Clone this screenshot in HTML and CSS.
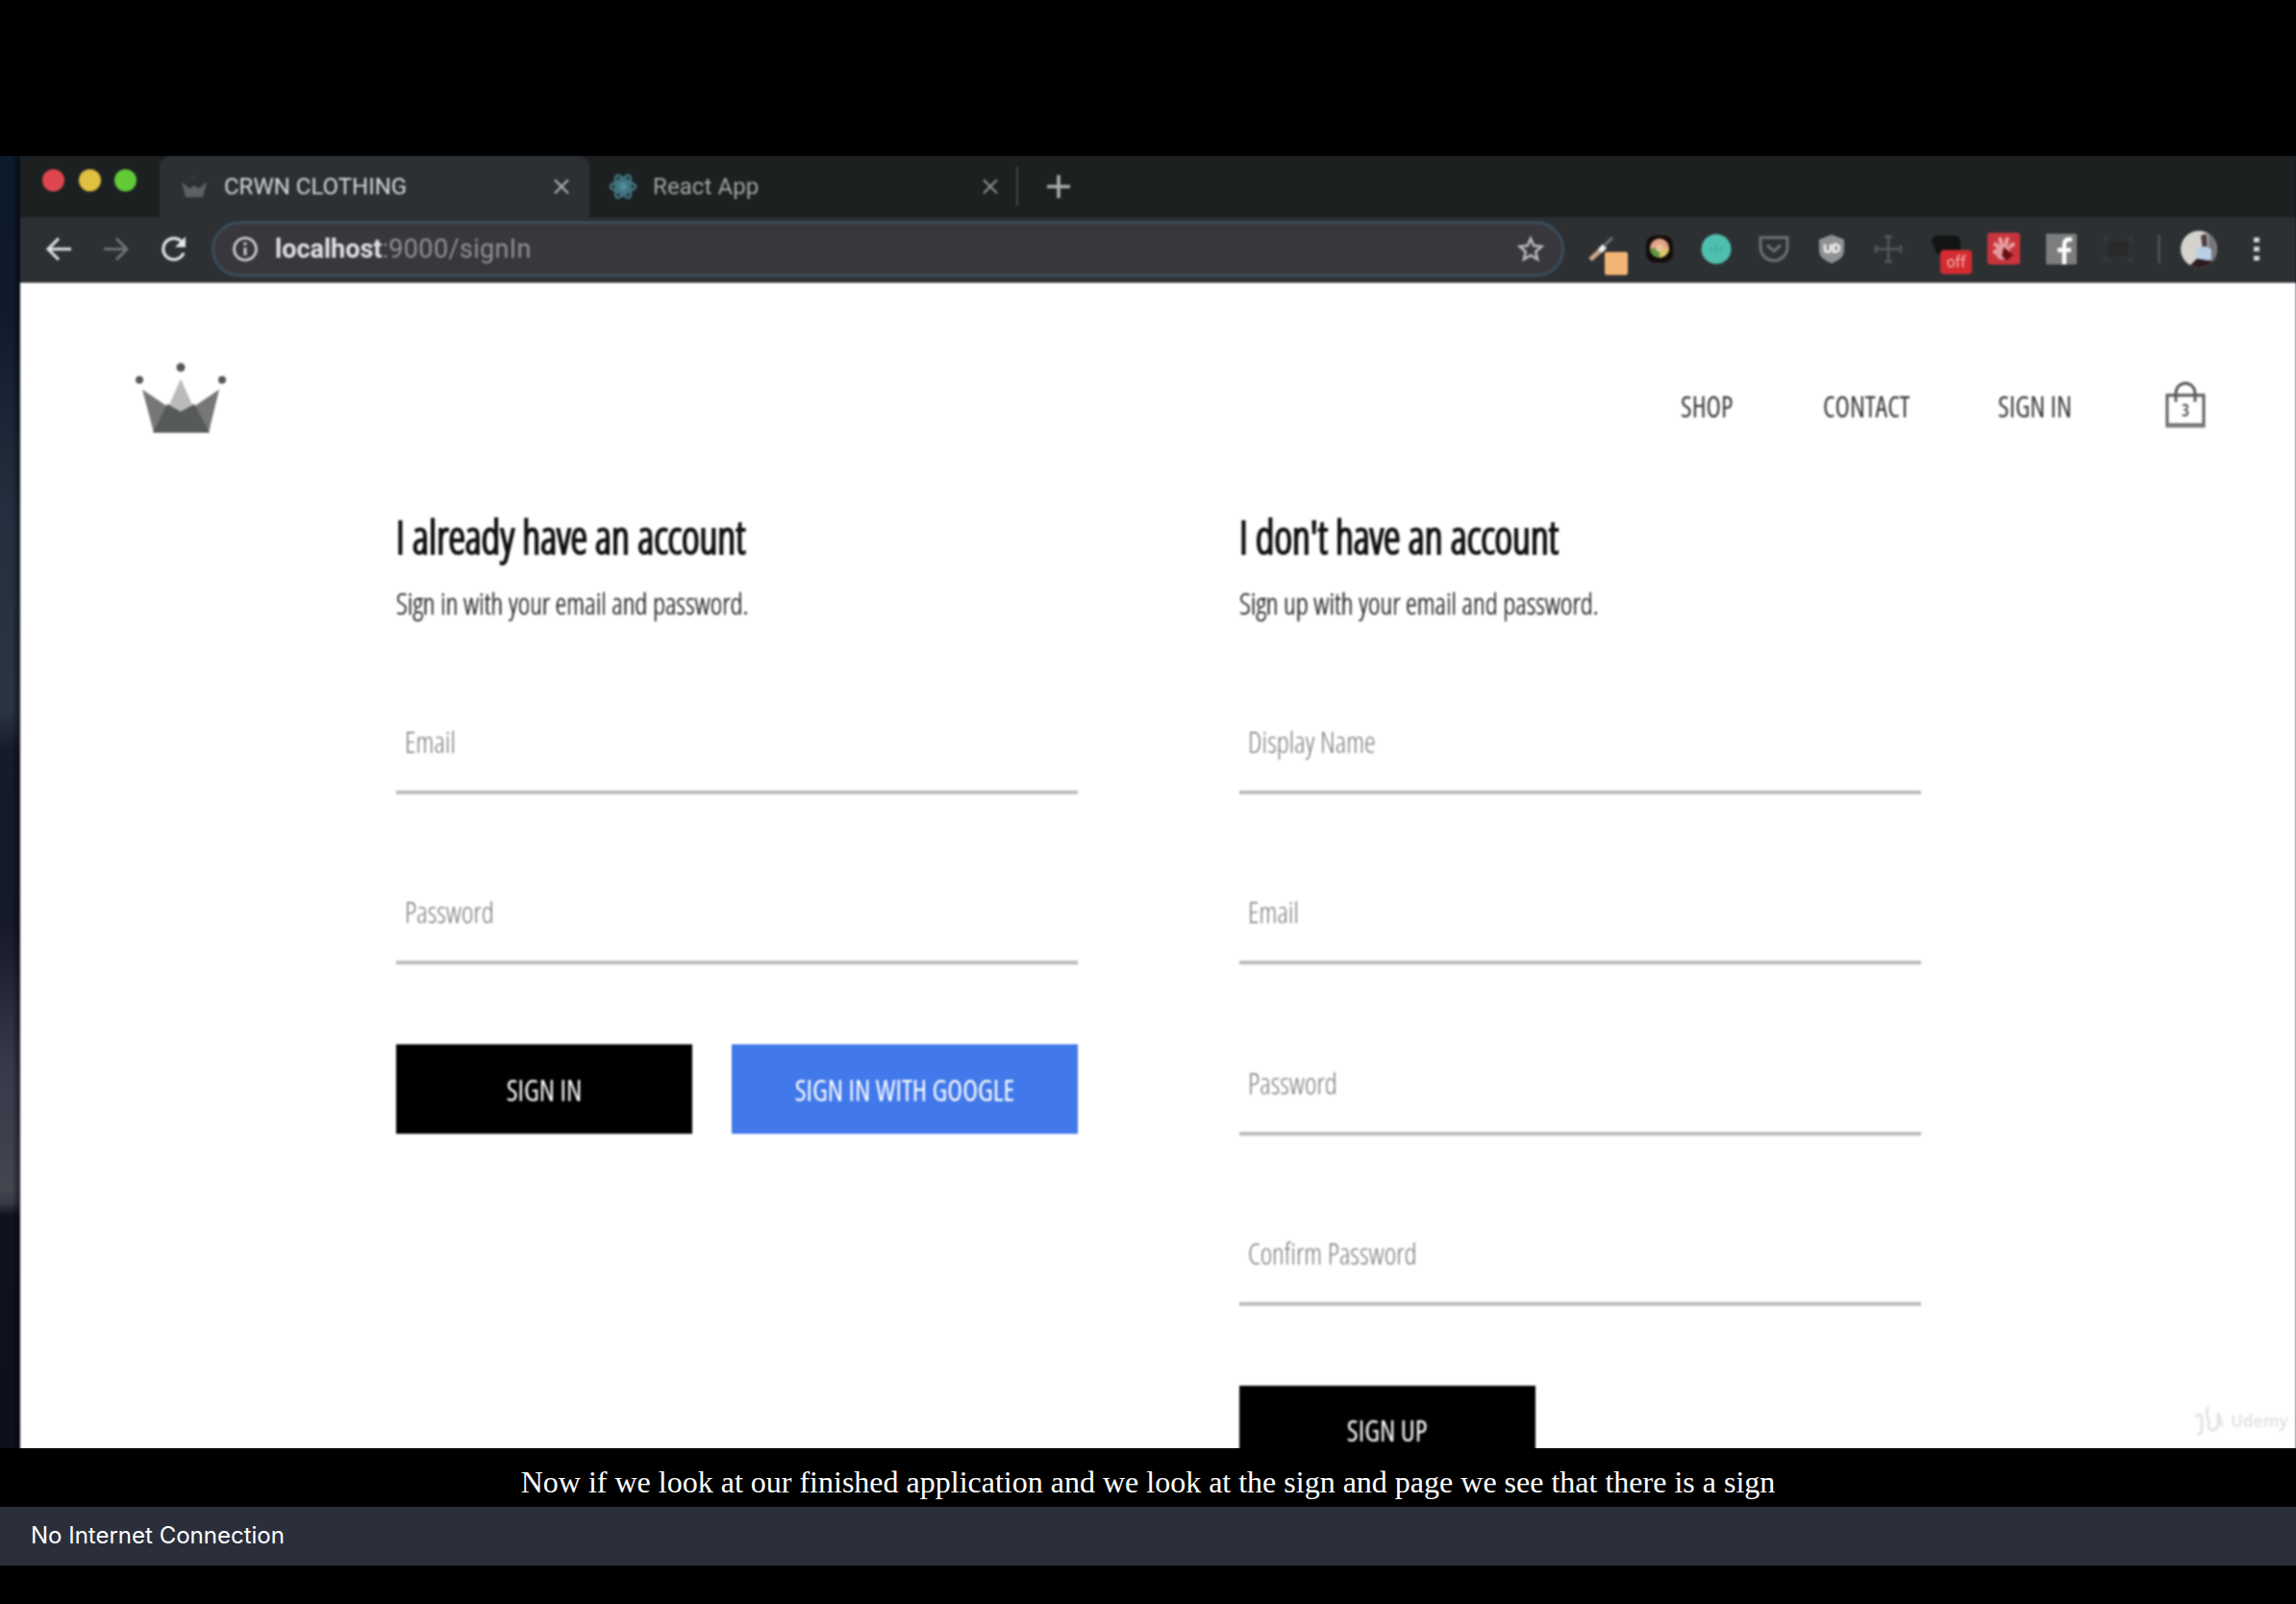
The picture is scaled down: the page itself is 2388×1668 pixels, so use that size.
FILE: index.html
```
<!DOCTYPE html>
<html lang="en">
<head>
<meta charset="utf-8">
<title>CRWN CLOTHING</title>
<link rel="stylesheet" href="styles.css">
</head>
<body>
<div class="player">
  <div class="video">
    <div class="desktop"></div>
    <div class="browser">
      <div class="tabstrip">
        <div class="lights"><i class="red"></i><i class="yellow"></i><i class="green"></i></div>
        <div class="tab active">
          <svg class="fav" width="30" height="28" viewBox="0 0 30 28"><path d="M2 9l8 7 5-3 5 3 8-7-4 16H6z" fill="#5d6162"/><circle cx="15" cy="4" r="1.5" fill="#444"/></svg>
          <span class="tab-title t-crwn">CRWN CLOTHING</span>
          <svg class="close" width="16" height="18" viewBox="0 0 16 18"><path d="M1 2l14 14M15 2L1 16" stroke="#a9abad" stroke-width="2.4"/></svg>
        </div>
        <div class="tab idle">
          <svg class="fav" width="30" height="30" viewBox="0 0 30 30" fill="none" stroke="#41747f" stroke-width="2.6"><circle cx="15" cy="15" r="8" fill="#4f8d9a"/><ellipse cx="15" cy="15" rx="13" ry="5.2"/><ellipse cx="15" cy="15" rx="13" ry="5.2" transform="rotate(60 15 15)"/><ellipse cx="15" cy="15" rx="13" ry="5.2" transform="rotate(120 15 15)"/></svg>
          <span class="tab-title t-react">React App</span>
          <svg class="close" width="16" height="18" viewBox="0 0 16 18"><path d="M1 2l14 14M15 2L1 16" stroke="#8a8c8e" stroke-width="2.2"/></svg>
        </div>
        <svg class="plus" width="24" height="24" viewBox="0 0 24 24"><path d="M12 0v24M0 12h24" stroke="#a9abac" stroke-width="3.6"/></svg>
      </div>
      <div class="toolbar">
        <svg width="28" height="28" viewBox="0 0 28 28" fill="none" stroke="#e3e4e5" stroke-width="3"><path d="M27 14H3M14 3L3 14l11 11"/></svg>
        <svg class="fwd" width="28" height="28" viewBox="0 0 28 28" fill="none" stroke="#75787a" stroke-width="2.6"><path d="M1 14h24M14 3l11 11-11 11"/></svg>
        <svg class="reload" width="28" height="28" viewBox="0 0 28 28"><path d="M24 18A11 11 0 1 1 22 6.500" fill="none" stroke="#e3e4e5" stroke-width="3.200"/><path d="M26 1v11H15z" fill="#e3e4e5"/></svg>
        <div class="omnibox">
          <svg width="28" height="28" viewBox="0 0 28 28"><circle cx="14" cy="14" r="11.500" fill="none" stroke="#d0d1d2" stroke-width="2.600"/><path d="M14 12.500v8M14 7v3" stroke="#d0d1d2" stroke-width="3"/></svg>
          <span class="url"><b>localhost</b>:9000/signIn</span>
          <svg class="star" width="28" height="28" viewBox="0 0 28 28"><path d="M14 3l3.200 7.600 8.200.7-6.200 5.400 1.900 8L14 20.400l-7.100 4.300 1.900-8-6.200-5.400 8.200-.7z" fill="none" stroke="#b9bbbd" stroke-width="2.500"/></svg>
        </div>
        <div class="extensions">
          <svg width="44" height="44" viewBox="0 0 44 44"><path d="M4 26L15 16" stroke="#c9a68a" stroke-width="5"/><path d="M14 17l5-5" stroke="#f2f2f2" stroke-width="6"/><path d="M19 11l8-8" stroke="#73716f" stroke-width="3"/><rect x="19" y="18" width="24" height="24" rx="2" fill="#f4b574"/></svg>
          <svg width="28" height="30" viewBox="0 0 28 30"><rect width="28" height="28" y="1" rx="9" fill="#130c0a"/><circle cx="14" cy="14" r="10" fill="#e4a08a"/><path d="M4 14a10 10 0 0 0 10 10V14z" fill="#5c9a3c"/><path d="M14 24a10 10 0 0 0 10-10H14z" fill="#d9c56b"/><circle cx="14" cy="14" r="4" fill="#e8c39a"/></svg>
          <svg width="32" height="32" viewBox="0 0 32 32"><circle cx="16" cy="16" r="15.500" fill="#4fbfae"/><path d="M11 14v4M16 12v8M21 14v4" stroke="#41aaa0" stroke-width="2"/></svg>
          <svg width="32" height="30" viewBox="0 0 32 30" fill="none" stroke="#6d7072" stroke-width="3"><path d="M2 3h28v10a14 14 0 0 1-28 0z"/><path d="M9 11l7 6 7-6"/></svg>
          <svg width="28" height="32" viewBox="0 0 28 32"><path d="M14 1l13 5v12q0 8-13 13Q1 26 1 18V6z" fill="#8f9192"/><path d="M7 11v5q0 3 3 3t3-3v-5M16 11v8q6 0 6-4t-6-4" fill="none" stroke="#eee" stroke-width="2.600"/></svg>
          <svg width="30" height="32" viewBox="0 0 30 32" stroke="#55585a" stroke-width="2.500" fill="none"><path d="M15 2v28M1 16h28M11 3h8M11 29h8M2 12v8M28 12v8"/></svg>
          <svg class="off-icon" width="44" height="44" viewBox="0 0 44 44"><path d="M1 9q0-6 7-6h16q7 0 7 6v10q0 5-6 5H12q-4 0-7-5z" fill="#131414"/><rect x="10" y="18" width="33" height="25" rx="4" fill="#d42c30"/><text x="26.500" y="36" text-anchor="middle" class="off">off</text></svg>
          <svg width="34" height="34" viewBox="0 0 34 34"><rect width="34" height="33" rx="3" fill="#c9343c"/><path d="M7 11l5 4M13 5l2 8M21 5l-2 8M28 11l-5 4M6 20h5" stroke="#e9a5a8" stroke-width="4"/><circle cx="16" cy="20" r="8" fill="#e39a9d"/><path d="M17 15l10 8-7 6-5-5z" fill="#6a0f15"/></svg>
          <svg width="32" height="32" viewBox="0 0 32 32"><rect width="32" height="32" rx="1" fill="#7b7d7e"/><path d="M27 6h-3q-5 0-5 6v20M12 17h14" fill="none" stroke="#fff" stroke-width="4.400"/></svg>
          <svg width="32" height="28" viewBox="0 0 32 28"><path d="M2 2h5M25 2h5M2 26h5M25 26h5M2 2v5M30 2v5M2 21v5M30 21v5" stroke="#3b3a3a" stroke-width="2"/><rect x="6" y="7" width="20" height="14" fill="#2a2828"/></svg>
          <i class="bar"></i>
          <svg width="40" height="40" viewBox="0 0 40 40"><defs><clipPath id="face"><circle cx="20" cy="20" r="19"/></clipPath></defs><g clip-path="url(#face)"><rect width="40" height="40" fill="#d4d3ce"/><path d="M29 0l11 6v30H31z" fill="#77777a"/><path d="M22 6l6-2 1 14-5 3z" fill="#4a3d42"/><path d="M17 20l10-3 6 3v11H19z" fill="#b9cfe6"/><path d="M10 38l8-8 18 3-6 8z" fill="#2b1a1f"/></g></svg>
          <svg class="dots" width="8" height="28" viewBox="0 0 8 28" fill="#d4d5d6"><rect x="1" y="2" width="6" height="5"/><rect x="1" y="11.500" width="6" height="5"/><rect x="1" y="21" width="6" height="5"/></svg>
        </div>
      </div>
      <div class="page">
        <header class="header">
          <svg width="96" height="76" viewBox="0 0 96 76"><path d="M8 29l34 23-22 22z" fill="#777"/><path d="M88 29L54 52l23 22z" fill="#777"/><path d="M48 18l12 27-12 7-12-7z" fill="#b9bbba"/><path d="M34 44l14 8 14-8 16 30H19z" fill="#565a59"/><g fill="#555958"><circle cx="5" cy="19" r="4"/><circle cx="48" cy="6" r="4.500"/><circle cx="91" cy="19" r="4"/></g></svg>
          <nav class="nav">
            <a class="n-shop">SHOP</a><a class="n-contact">CONTACT</a><a class="n-sign">SIGN IN</a>
            <svg class="bag" width="42" height="50" viewBox="0 0 42 50" fill="none" stroke="#555" stroke-width="2.800"><path d="M2 15h38v32H2z"/><path d="M2 46h38" stroke-width="4" stroke="#777"/><path d="M11 22v-9a10 10.500 0 0 1 20 0v9"/><text x="21" y="37" text-anchor="middle" class="count">3</text></svg>
          </nav>
        </header>
        <main class="auth">
          <section class="col">
            <h2><span>I already have an account</span></h2>
            <p><span>Sign in with your email and password.</span></p>
            <div class="field"><span>Email</span></div>
            <div class="field"><span>Password</span></div>
            <div class="buttons"><div class="btn dark"><span>SIGN IN</span></div><div class="btn google"><span>SIGN IN WITH GOOGLE</span></div></div>
          </section>
          <section class="col">
            <h2><span>I don't have an account</span></h2>
            <p><span>Sign up with your email and password.</span></p>
            <div class="field"><span>Display Name</span></div>
            <div class="field"><span>Email</span></div>
            <div class="field"><span>Password</span></div>
            <div class="field"><span>Confirm Password</span></div>
            <div class="buttons"><div class="btn dark"><span>SIGN UP</span></div></div>
          </section>
        </main>
      </div>
    </div>
    <div class="watermark"><svg width="34" height="34" viewBox="0 0 34 34" fill="none" stroke="#e4e4e4" stroke-width="3"><path d="M3 13q7-5 7 3v9q0 6-5 7M17 3q-4 6 0 13v6q0 6 5 5t5-8V9l4 14"/></svg><span>Udemy</span></div>
  </div>
  <div class="caption"><span>Now if we look at our finished application and we look at the sign and page we see that there is a sign</span></div>
  <div class="offline"><span>No Internet Connection</span></div>
</div>
</body>
</html>
```
FILE: styles.css
```
* { box-sizing: border-box; }
body { margin: 0; background: #000; }
svg { display: block; flex: none; }
.player { width: 2388px; height: 1668px; padding-top: 162px; display: flex; flex-direction: column; background: #000; overflow: hidden; }
.video { position: relative; height: 1344px; flex: none; display: flex; overflow: hidden; background: #101722; }
.desktop { width: 21px; flex: none; background: linear-gradient(90deg, transparent 60%, rgba(0,0,0,.55)), linear-gradient(#0b1a2c 0, #111a2b 12%, #24303f 28%, #2b3442 43%, #141b29 46%, #161a29 60%, #35394a 70%, #42464f 80%, #363b46 81%, #10131f 82%, #0c101c 100%); }
.browser { width: 2367px; flex: none; display: flex; flex-direction: column; background: #fff; filter: blur(1.200px); }

.tabstrip { height: 64px; flex: none; display: flex; background: #1d2021; font-family: Roboto, "Liberation Sans", sans-serif; }
.lights { width: 145px; display: flex; gap: 14.500px; padding: 14px 0 0 23px; }
.lights i { width: 23px; height: 23px; border-radius: 50%; }
.red { background: #e0464f; }
.yellow { background: #e0c041; }
.green { background: #62c937; }
.tab { display: flex; align-items: center; padding-bottom: 1px; }
.active { width: 447px; background: #2d3032; border-radius: 12px 12px 0 0; padding: 0 21px 1px 21px; }
.idle { width: 446px; padding: 0 19px 1px 20px; border-right: 2px solid transparent; border-image: linear-gradient(transparent 18%, #444749 18% 80%, transparent 80%) 1; }
.fav { margin-right: 16px; }
.tab-title { flex: 1; font-size: 24px; line-height: 30px; white-space: nowrap; }
.t-crwn { color: #d6d7d8; }
.t-react { color: #a2a4a5; letter-spacing: .1px; }
.plus { margin: 20px 0 0 30px; }

.toolbar { height: 68px; flex: none; display: flex; align-items: center; background: #2d3032; padding: 0 0 2px 26px; font-family: Roboto, "Liberation Sans", sans-serif; }
.fwd { margin-left: 32px; }
.reload { margin-left: 32px; }
.omnibox { width: 1407px; height: 58px; margin-left: 25px; border: 3px solid #3b4d5b; border-radius: 29px; background: #38383c; display: flex; align-items: center; padding: 0 18px; }
.url { flex: 1; margin-left: 17px; font-size: 27px; letter-spacing: .35px; line-height: 34px; color: #909295; white-space: nowrap; }
.url b { color: #e0e1e2; letter-spacing: 0; }
.extensions { display: flex; align-items: center; margin-left: 23px; }
.extensions > :first-child { margin: 14px 18px 0 0; }
.extensions > :nth-child(2) { margin-right: 29px; }
.extensions > :nth-child(3) { margin-right: 28px; }
.extensions > :nth-child(4) { margin-right: 30px; }
.extensions > :nth-child(5) { margin-right: 30px; }
.extensions > :nth-child(6) { margin-right: 29px; }
.off-icon { margin: 10px 15px 0 0; }
.extensions > :nth-child(8) { margin-right: 27px; }
.extensions > :nth-child(9) { margin-right: 27px; }
.extensions > :nth-child(10) { margin-right: 25px; }
.bar { width: 3px; height: 30px; background: #4b4e50; margin-right: 20px; }
.dots { margin-left: 36px; }
.off { font: 16px Roboto, sans-serif; fill: #f3b6b6; }

.page { flex: 1; background: #fff; font-family: "Open Sans", sans-serif; font-stretch: 75%; color: #111; }
.header { height: 232px; display: flex; align-items: flex-start; justify-content: space-between; padding: 82px 94px 0 119px; }
.nav { display: flex; align-items: flex-start; font-size: 31px; line-height: 44px; color: #3a3a3a; padding-top: 20px; }
.nav a { white-space: nowrap; transform: scaleX(.915); transform-origin: left; padding-top: 4px; }
.n-shop { width: 148px; }
.n-contact { width: 182px; }
.n-sign { width: 174px; }
.count { font: 600 18px "Open Sans", sans-serif; font-stretch: 75%; fill: #444; stroke: none; }

.auth { display: flex; gap: 168px; padding-left: 391px; }
.auth span { display: inline-block; transform: scaleX(.928); transform-origin: left; white-space: nowrap; }
.col { width: 709px; display: flex; flex-direction: column; }
h2 { margin: 0 0 16px; height: 64px; font-size: 47px; line-height: 65px; font-weight: 300; -webkit-text-stroke: 2.200px #111; white-space: nowrap; }
.auth h2 span { transform: scaleX(.94); }
p { margin: 0; height: 43px; font-size: 32px; line-height: 42px; font-weight: 300; color: #222; -webkit-text-stroke: .4px #222; white-space: nowrap; }
.field { height: 177.2px; display: flex; align-items: flex-end; border-bottom: 4px solid #bdbdbd; padding: 0 0 29px 9px; font-size: 32px; line-height: 44px; font-weight: 300; color: #777; }
.buttons { display: flex; justify-content: space-between; margin-top: 83px; }
.btn { width: 308px; height: 93px; display: flex; align-items: center; justify-content: center; color: #fff; font-size: 31px; white-space: nowrap; }
.auth .btn span { transform-origin: center; transform: scaleX(.937); }
.dark { background: #000; }
.google { width: 360px; background: #4178ea; }

.watermark { position: absolute; right: 8px; bottom: 12px; display: flex; align-items: center; gap: 6px; font: 700 17px "Open Sans", sans-serif; color: #e6e6e6; filter: blur(1.200px); }

.caption { height: 61px; flex: none; text-align: center; color: #fff; font-family: "Liberation Serif", serif; font-size: 32px; line-height: 71px; white-space: nowrap; }
.offline { height: 61px; flex: none; background: #2a2f3b; color: #fff; padding-left: 32px; font-family: Inter, sans-serif; font-size: 24px; line-height: 60px; }
```
